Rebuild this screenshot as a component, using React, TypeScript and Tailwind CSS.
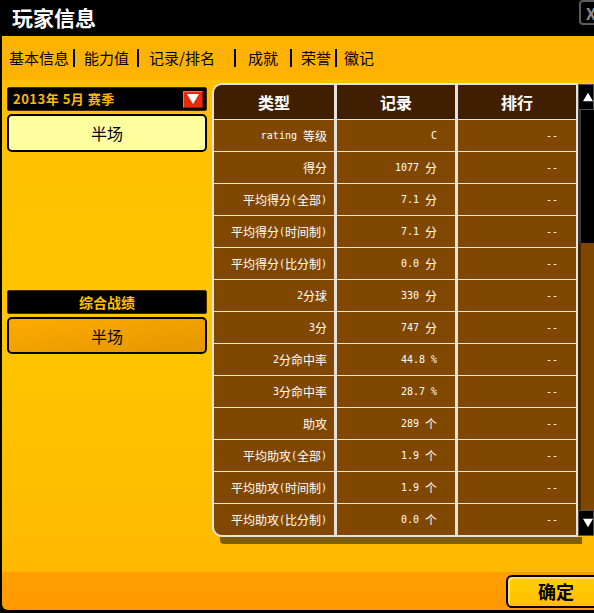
import type { ReactNode } from 'react';

type Row = [string, string, string];

const rows: Row[] = [
  ['rating 等级', 'C', '--'],
  ['得分', '1077 分', '--'],
  ['平均得分(全部)', '7.1 分', '--'],
  ['平均得分(时间制)', '7.1 分', '--'],
  ['平均得分(比分制)', '0.0 分', '--'],
  ['2分球', '330 分', '--'],
  ['3分', '747 分', '--'],
  ['2分命中率', '44.8 %', '--'],
  ['3分命中率', '28.7 %', '--'],
  ['助攻', '289 个', '--'],
  ['平均助攻(全部)', '1.9 个', '--'],
  ['平均助攻(时间制)', '1.9 个', '--'],
  ['平均助攻(比分制)', '0.0 个', '--'],
];

// latin runs get a half-width mono face, CJK stays full width
function Mixed({ text }: { text: string }) {
  const parts = text.split(/([\x00-\x7f]+)/).filter(Boolean);
  return (
    <>
      {parts.map((p, i) =>
        /^[\x00-\x7f]+$/.test(p) ? (
          <span key={i} className="font-['DejaVu_Sans_Mono',monospace] text-[10px] whitespace-pre">
            {p}
          </span>
        ) : (
          <span key={i}>{p}</span>
        )
      )}
    </>
  );
}

function Bar({ ml }: { ml: string }) {
  return <span className={`${ml} w-[2px] h-[18px] mt-[2px] bg-black`} />;
}

function Triangle({ down, className }: { down?: boolean; className?: string }) {
  return (
    <svg width="12" height="10" viewBox="0 0 12 10" className={className}>
      <polygon points={down ? '0,0 12,0 6,10' : '0,10 12,10 6,0'} fill="#fff" />
    </svg>
  );
}

function Cell({ children, className }: { children: ReactNode; className?: string }) {
  return (
    <div className={`h-[31px] bg-[#7f4700] flex items-center justify-end text-white text-[12px] ${className ?? ''}`}>
      {children}
    </div>
  );
}

export default function App() {
  return (
    <div className="w-[594px] h-[613px] bg-black flex flex-col overflow-hidden font-['Noto_Sans_CJK_SC',sans-serif]">
      {/* title bar */}
      <div className="h-[36px] shrink-0 flex justify-between">
        <span className="ml-[12px] mt-[2px] text-[21px] font-bold text-white leading-[30px]">玩家信息</span>
        <div className="w-[26px] h-[25px] mr-[-11px] border-2 border-[#5c5c5c] rounded-[4px] flex items-center pl-[5px] text-[#8c8c8c] text-[16px] font-bold leading-none">
          X
        </div>
      </div>

      <div className="ml-[2px] h-[574px] rounded-bl-[6px] overflow-hidden flex flex-col">
        {/* tabs */}
        <div className="h-[44px] shrink-0 bg-[#ffb300] flex items-center text-[15px] text-black leading-none pb-[2px]">
          <span className="ml-[7px]">基本信息</span>
          <Bar ml="ml-[4px]" />
          <span className="ml-[9px]">能力值</span>
          <Bar ml="ml-[8px]" />
          <span className="ml-[10px]">记录/排名</span>
          <Bar ml="ml-[19px]" />
          <span className="ml-[12px]">成就</span>
          <Bar ml="ml-[12px]" />
          <span className="ml-[9px]">荣誉</span>
          <Bar ml="ml-[4px]" />
          <span className="ml-[7px]">徽记</span>
        </div>

        {/* body */}
        <div className="h-[492px] shrink-0 flex bg-linear-to-b from-[#ffbf00] via-[#ffc600] to-[#ffb900] pl-[5px]">
          <div className="w-[200px] shrink-0 flex flex-col pt-[7px]">
            <div className="h-[24px] bg-black border border-[#4a2800] rounded-[2px] flex items-center pl-[5px] pr-[3px]">
              <span className="text-[13px] font-bold text-[#ffb800] tracking-[0.5px]">2013年 5月 赛季</span>
              <div className="ml-auto w-[20px] h-[17px] bg-[#e52d0c] border border-t-[#ff7050] border-l-[#ff7050] border-r-[#9a1800] border-b-[#9a1800] flex items-center justify-center">
                <Triangle down />
              </div>
            </div>
            <button className="mt-[3px] h-[38px] bg-[#ffffa0] border-2 border-black rounded-[5px] text-[16px] text-black">
              半场
            </button>

            <div className="mt-[138px] h-[24px] bg-black border border-[#4a2800] rounded-[2px] flex items-center justify-center text-[14px] font-bold text-[#ffc000]">
              综合战绩
            </div>
            <button className="mt-[3px] h-[37px] bg-linear-to-br from-[#ffab00] to-[#e39700] border-2 border-black rounded-[5px] text-[16px] text-black">
              半场
            </button>
          </div>

          {/* record table */}
          <div className="ml-[5px] w-[366px] shrink-0 pt-[3px] flex flex-col">
            <div className="bg-[#e2e2e2] p-[2px] rounded-l-[10px] grid grid-cols-[120px_118px_118px] gap-x-[3px] gap-y-px">
              {['类型', '记录', '排行'].map((h, i) => (
                <div
                  key={h}
                  className={`h-[34px] bg-[#3f1f00] flex items-center justify-center text-white text-[16px] font-bold ${i === 0 ? 'rounded-tl-[8px]' : ''}`}
                >
                  {h}
                </div>
              ))}
              {rows.map(([label, value, rank], r) => (
                <div key={label} className="contents">
                  <Cell className={`pr-[7px] ${r === rows.length - 1 ? 'rounded-bl-[8px]' : ''}`}>
                    <Mixed text={label} />
                  </Cell>
                  <Cell className="pr-[18px]">
                    <Mixed text={value} />
                  </Cell>
                  <Cell className="pr-[18px]">
                    <Mixed text={rank} />
                  </Cell>
                </div>
              ))}
            </div>
            <div className="ml-[8px] mr-[-4px] h-[7px] bg-[#7f6000] rounded-bl-[4px]" />
          </div>

          {/* scrollbar */}
          <div className="w-[16px] shrink-0 mt-[4px] flex flex-col">
            <div className="h-[26px] bg-black border border-[#505050] flex items-center justify-center">
              <Triangle className="ml-[4px]" />
            </div>
            <div className="h-[133px] bg-black border-l-[3px] border-[#3a3a3a]" />
            <div className="h-[267px] bg-[#7f4700] border-l-[3px] border-[#4a2800]" />
            <div className="h-[26px] bg-black border border-[#505050] flex items-center justify-center">
              <Triangle down className="ml-[4px]" />
            </div>
          </div>
        </div>

        {/* footer */}
        <div className="h-[38px] shrink-0 bg-linear-to-b from-[#ffa000] to-[#ff9800] flex justify-end pt-[3px]">
          <button className="w-[100px] h-[33px] mr-[-12px] bg-linear-to-b from-[#ffd000] to-[#ffbf00] border-2 border-black rounded-[6px] shadow-[inset_2px_2px_0_#ffe060] text-[18px] font-bold text-black flex items-center justify-center">
            确定
          </button>
        </div>
      </div>
    </div>
  );
}
